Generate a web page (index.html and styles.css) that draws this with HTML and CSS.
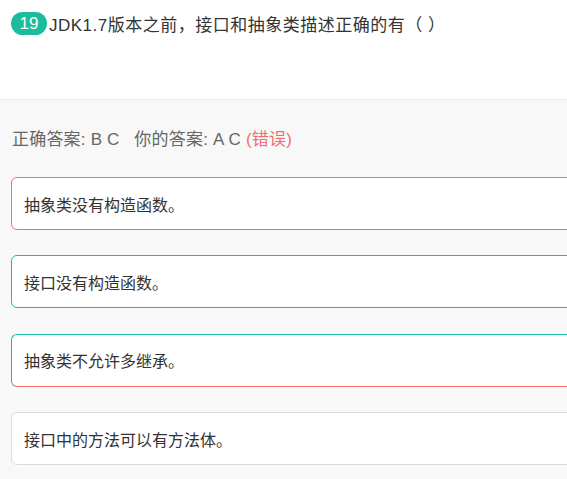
FILE: index.html
```html
<!DOCTYPE html>
<html lang="zh">
<head>
<meta charset="utf-8">
<link rel="stylesheet" href="styles.css">
</head>
<body>
<div class="question">
  <div class="title-row">
    <span class="badge">19</span>
    <span class="title">JDK1.7版本之前，接口和抽象类描述正确的有（ ）</span>
  </div>
</div>
<div class="answers">
  <div class="result">正确答案: B C&nbsp;&nbsp; 你的答案: A C <span class="wrong">(错误)</span></div>
  <div class="options">
    <div class="option opt-wrong">抽象类没有构造函数。</div>
    <div class="option opt-right">接口没有构造函数。</div>
    <div class="option opt-mixed">抽象类不允许多继承。</div>
    <div class="option">接口中的方法可以有方法体。</div>
  </div>
</div>
</body>
</html>
```
FILE: styles.css
```css
html, body {
  margin: 0;
  padding: 0;
  background: #f8f8f8;
  overflow: hidden;
  font-family: "Liberation Sans", "Noto Sans CJK SC", sans-serif;
}
.question {
  background: #fff;
  height: 100px;
  border-bottom: 1px solid #ececec;
  box-sizing: border-box;
  padding: 11px 0 0 11px;
}
.title-row {
  display: flex;
  align-items: center;
  gap: 2px;
}
.badge {
  display: inline-flex;
  align-items: center;
  justify-content: center;
  width: 36px;
  height: 23px;
  border-radius: 12px;
  background: #1bbc9b;
  color: #fff;
  font-size: 17px;
}
.title {
  font-size: 17px;
  letter-spacing: 0.5px;
  color: #333;
}
.answers {
  padding: 28px 0 0 11px;
}
.result {
  font-size: 17px;
  letter-spacing: 0.2px;
  line-height: 24px;
  color: #666;
  margin-left: 1px;
}
.wrong {
  color: #f56c6c;
}
.options {
  margin-top: 25px;
  margin-right: -20px;
  display: flex;
  flex-direction: column;
  gap: 25.4px;
}
.option {
  height: 53px;
  box-sizing: border-box;
  border: 1px solid #dcdcdc;
  border-radius: 6px;
  background: #fff;
  display: flex;
  align-items: center;
  padding-left: 12px;
  font-size: 16px;
  color: #333;
}
.opt-wrong {
  border-color: #f56c6c;
}
.opt-right {
  border-color: #1bbc9b;
}
.opt-mixed {
  border-color: #1bbc9b #f56c6c #f56c6c #1bbc9b;
}
```
